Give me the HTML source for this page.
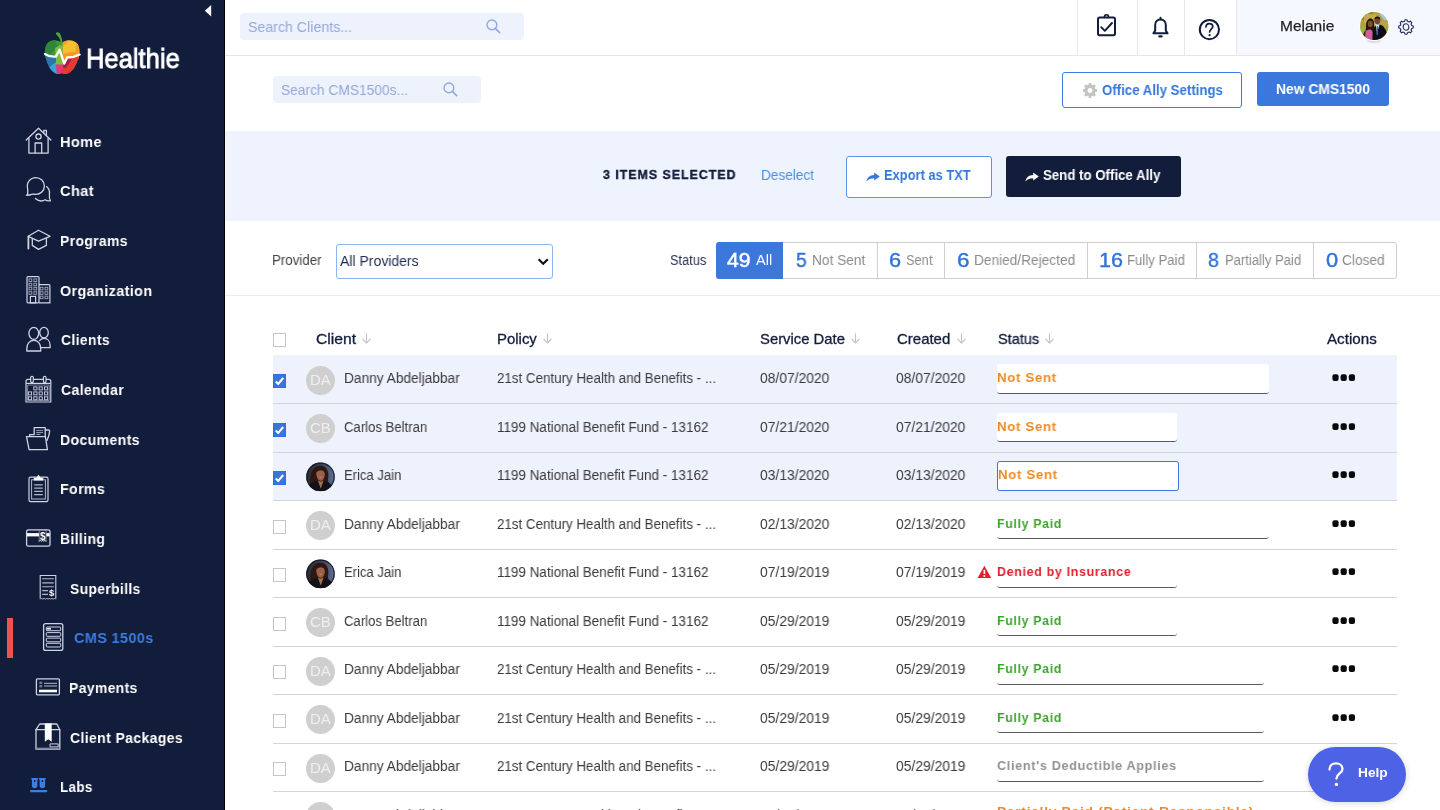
<!DOCTYPE html>
<html>
<head>
<meta charset="utf-8">
<title>CMS 1500s</title>
<style>
*{box-sizing:border-box;margin:0;padding:0}
html,body{width:1440px;height:810px;overflow:hidden;background:#fff;font-family:"Liberation Sans",sans-serif;color:#333}
.abs{position:absolute}
.t{position:absolute;white-space:nowrap;line-height:20px;transform-origin:0 50%;will-change:transform}
#side{position:absolute;left:0;top:0;width:225px;height:810px;background:#121c3b;border-right:1px solid #000}
.bar{position:absolute;left:7px;top:618px;width:6px;height:40px;background:#ef5350}
#main{position:absolute;left:225px;top:0;width:1215px;height:810px;background:#fff}
.hline{position:absolute;height:1px;background:#e6e6e6}
.vline{position:absolute;width:1px;background:#e8e8e8}
.box{position:absolute}
.rowbg{position:absolute;left:273px;width:1124px;background:#eef2fd}
.rowln{position:absolute;left:273px;width:1124px;height:1px;background:#d4d4d4;z-index:1}
.cb{position:absolute;left:273px;width:13px;height:14px;border:1px solid #c6c6c6;background:#fff;border-radius:0}
.cb.on{background:#3874de;border-color:#336fda;border-radius:0}
.cb svg{position:absolute;left:-1px;top:-1px}
.av{position:absolute;left:306px;width:29px;height:29px;border-radius:50%;background:#cfcfcf}
.ul{position:absolute;left:997px;height:29.750px;border-bottom:1px solid #5a5a5a;border-radius:3px}
.ul.w{background:#fff}
.ul.f{background:#fff;border:1px solid #3c78e0}
.sep{position:absolute;top:242px;width:1px;height:36.700px;background:#cfcfcf}
</style>
</head>
<body>
<div id="side">
<svg class="abs" style="left:200px;top:0" width="16" height="22" viewBox="200 0 16 22"><polygon points="204.800,10.800 211.200,4.900 211.200,16.600" fill="#fff"/></svg>
<svg class="abs" style="left:42px;top:30px" width="40" height="46" viewBox="42 30 40 46">
<defs><clipPath id="ap"><path d="M62 43 C58 39.300 50.500 39 47 44 C43 50 45.200 60.500 49.500 67.500 C52.800 72.800 57.500 75.600 62 73.200 C66.500 75.600 71.200 72.800 74.500 67.500 C78.800 60.500 81.500 50 77.500 44 C74 39 66 39.300 62 43 Z"/></clipPath></defs>
<g clip-path="url(#ap)">
<rect x="42" y="36" width="21" height="22" fill="#3c9a3a"/>
<polygon points="44,42 54,38 58,47 48,56 43,54" fill="#2f8636"/>
<polygon points="55,48 62,44 63,66 56,66" fill="#7dbd3a"/>
<rect x="62.600" y="36" width="20" height="24" fill="#f7c02f"/>
<polygon points="62.600,40 70,39 66,44 62.600,46" fill="#f4a12c"/>
<polygon points="76,44 82,42 82,58 75,52" fill="#f4a12c"/>
<polygon points="62.600,54 72,52 82,54 82,60 62.600,60" fill="#f3962b"/>
<rect x="42" y="56.500" width="15" height="22" fill="#2b74ad"/>
<polygon points="48,68 56,62 58,78 50,76" fill="#3aa3d4"/>
<polygon points="56,64 66,64 62,78 57,78" fill="#e8337d"/>
<polygon points="66,58 82,56 80,72 62,78 62,70" fill="#e63b2e"/>
<polygon points="64,60 72,59 66,68 63,68" fill="#a3214e"/>
<polygon points="56,57 62,57 63,64.500 56,64.500" fill="#7dbd3a"/>
</g>
<path d="M55.800 33 C57.200 31.600 59.400 32 60.400 34.400 C61.800 37.600 62.600 41.500 62.600 46 L61.400 46 C61 41.600 59.800 38 58 36.200 C57 35.200 55.800 34.400 55.800 33 Z" fill="#4aa63a"/>
<path d="M45 54 C48.500 56.400 52 57 55.800 56.600 L59.600 49.600 L64.200 63.600 L67.200 57.400 C71.500 57.600 76 56.500 79.600 54.600" fill="none" stroke="#fff" stroke-width="2.300" stroke-linejoin="round" stroke-linecap="round"/>
</svg>
<div class="t" id="logo" style="left:85.62px;top:48.12px;font-size:28.5px;color:#fff;transform:scaleX(0.8964);-webkit-text-stroke:0.9px #fff;">Healthie</div>
<div class="bar"></div>
<svg class="abs" style="left:22px;top:124px" width="34" height="34" viewBox="22 124 34 34"><g fill="none" stroke="#cfd4e2" stroke-width="1.3" stroke-linejoin="round" stroke-linecap="round"><path d="M26.2 140 L38.5 128.2 L50.9 140"/><path d="M28.9 138.5 V153.1 H48.1 V138.5"/><path d="M35.1 153 V143 H41.7 V153"/><circle cx="38.5" cy="136.6" r="2.6"/><path d="M43.8 132.8 V130.4 H46.4 V135.4"/></g></svg>
<div class="t" id="nav0" style="left:60.36px;top:131.50px;font-size:15px;color:#fff;font-weight:bold;letter-spacing:0.4px;transform:scaleX(0.9686);">Home</div>
<svg class="abs" style="left:22px;top:174px" width="34" height="34" viewBox="22 174 34 34"><g fill="none" stroke="#cfd4e2" stroke-width="1.3" stroke-linejoin="round" stroke-linecap="round"><path d="M27.6 194.6 C27.8 193 28 191 27.6 188.600 C26.200 182.600 30.200 177.600 35.800 177.600 C40.600 177.600 44.400 181.400 44.400 186 C44.400 190.800 40.400 194.600 35.600 194.400 C33.800 194.400 32.600 193.800 31.400 194.400 C30 195.200 28.400 195.400 26.400 195.200 Z"/><path d="M46.600 186.600 C48.800 188.400 49.800 191 49.400 193.800 C49.200 196.200 49 198.600 50.400 200.800 C48.400 201.200 46.600 200.800 45.200 199.800 C42.600 201.400 38.600 201.200 35.400 198.400"/></g></svg>
<div class="t" id="nav1" style="left:60.28px;top:181.18px;font-size:15px;color:#fff;font-weight:bold;letter-spacing:0.4px;transform:scaleX(0.9746);">Chat</div>
<svg class="abs" style="left:22px;top:224px" width="34" height="34" viewBox="22 224 34 34"><g fill="none" stroke="#cfd4e2" stroke-width="1.3" stroke-linejoin="round" stroke-linecap="round"><path d="M38.5 230.2 L50 236.3 L38.5 241.2 L28.2 236.3 Z"/><path d="M28.4 236.6 V248.6" stroke-width="1.8"/><path d="M32.3 238.6 V245.4 L38.5 249.4 L46.4 245.4 V238.2"/></g></svg>
<div class="t" id="nav2" style="left:60.38px;top:230.85px;font-size:15px;color:#fff;font-weight:bold;letter-spacing:0.4px;transform:scaleX(0.9265);">Programs</div>
<svg class="abs" style="left:22px;top:272px" width="34" height="34" viewBox="22 272 34 34"><g fill="none" stroke="#cfd4e2" stroke-width="1.2"><rect x="27" y="276.6" width="12" height="26.2" rx="1"/><path d="M39 284.6 H49 Q49.9 284.6 49.9 285.6 V302.8 H39"/><rect x="30.4" y="296.4" width="5.2" height="6.4"/></g><g fill="none" stroke="#cfd4e2" stroke-width="0.9" opacity="0.75"><rect x="29.0" y="278.9" width="2.8" height="2.6"/><rect x="29.0" y="283.2" width="2.8" height="2.6"/><rect x="29.0" y="287.3" width="2.8" height="2.6"/><rect x="29.0" y="291.7" width="2.8" height="2.6"/><rect x="33.9" y="278.9" width="2.8" height="2.6"/><rect x="33.9" y="283.2" width="2.8" height="2.6"/><rect x="33.9" y="287.3" width="2.8" height="2.6"/><rect x="33.9" y="291.7" width="2.8" height="2.6"/><rect x="40.2" y="287.3" width="2.8" height="2.6"/><rect x="40.2" y="291.7" width="2.8" height="2.6"/><rect x="40.2" y="296.1" width="2.8" height="2.6"/><rect x="45.0" y="287.3" width="2.8" height="2.6"/><rect x="45.0" y="291.7" width="2.8" height="2.6"/><rect x="45.0" y="296.1" width="2.8" height="2.6"/></g></svg>
<div class="t" id="nav3" style="left:60.28px;top:280.53px;font-size:15px;color:#fff;font-weight:bold;letter-spacing:0.4px;transform:scaleX(0.9585);">Organization</div>
<svg class="abs" style="left:22px;top:322px" width="34" height="34" viewBox="22 322 34 34"><g fill="none" stroke="#cfd4e2" stroke-width="1.3" stroke-linejoin="round" stroke-linecap="round"><ellipse cx="33.8" cy="333.3" rx="4.9" ry="6"/><path d="M26.8 351 V348.4 C26.8 343.6 29.8 340.4 33.8 340.4 C37.8 340.4 40.7 343.6 40.7 348.4 V351 Z"/><ellipse cx="44" cy="332.6" rx="4.3" ry="5.3"/><path d="M39.6 340.6 C41 339 42.4 338.4 44 338.4 C47.6 338.4 50.1 341.2 50.1 345.4 V347.7 H41.2"/></g></svg>
<div class="t" id="nav4" style="left:60.51px;top:330.20px;font-size:15px;color:#fff;font-weight:bold;letter-spacing:0.4px;transform:scaleX(0.9289);">Clients</div>
<svg class="abs" style="left:22px;top:372px" width="34" height="34" viewBox="22 372 34 34"><g fill="none" stroke="#cfd4e2" stroke-width="1.2"><path d="M26 402 V381.4 Q26 379.4 28 379.4 H48.8 Q50.8 379.4 50.8 381.4 V402 Z"/><path d="M26 383.4 H50.8"/><path d="M27.6 385 H49.2 V400.4 H27.6 Z" stroke-width="0.8" opacity="0.7"/></g><g fill="#121c3b" stroke="#dfe3ee" stroke-width="1.1"><rect x="30.7" y="376.2" width="2.6" height="6.4" rx="1.3"/><rect x="43.4" y="376.2" width="2.6" height="6.4" rx="1.3"/></g><g fill="none" stroke="#cfd4e2" stroke-width="0.9"><rect x="28.4" y="391.9" width="3.2" height="3"/><rect x="28.4" y="396.8" width="3.2" height="3"/><rect x="33.8" y="386.9" width="3.2" height="3"/><rect x="33.8" y="391.9" width="3.2" height="3"/><rect x="33.8" y="396.8" width="3.2" height="3"/><rect x="39.1" y="386.9" width="3.2" height="3"/><rect x="39.1" y="391.9" width="3.2" height="3"/><rect x="39.1" y="396.8" width="3.2" height="3"/><rect x="44.5" y="386.9" width="3.2" height="3"/><rect x="44.5" y="391.9" width="3.2" height="3"/><rect x="44.5" y="396.8" width="3.2" height="3"/></g></svg>
<div class="t" id="nav5" style="left:60.51px;top:379.88px;font-size:15px;color:#fff;font-weight:bold;letter-spacing:0.4px;transform:scaleX(0.9354);">Calendar</div>
<svg class="abs" style="left:22px;top:422px" width="34" height="34" viewBox="22 422 34 34"><g fill="none" stroke="#cfd4e2" stroke-width="1.3" stroke-linejoin="round" stroke-linecap="round" stroke-width="1.2"><path d="M26.5 436.6 H45.4 L47.4 449.6 H29.1 Z"/><path d="M29.6 436.4 V434.6 H34.2 V427.6 H45.2 V436.4"/><path d="M45.4 430 H48.4 Q49.8 430 49.6 431.6 C49.2 435 48.2 438 47 440.4"/><path d="M36.6 430.6 H42.6 M36.6 432.6 H42.6 M36.6 434.4 H40" stroke-width="0.9" opacity="0.8"/></g></svg>
<div class="t" id="nav6" style="left:60.37px;top:429.55px;font-size:15px;color:#fff;font-weight:bold;letter-spacing:0.4px;transform:scaleX(0.9371);">Documents</div>
<svg class="abs" style="left:22px;top:470px" width="34" height="36" viewBox="22 470 34 36"><g fill="none" stroke="#cfd4e2" stroke-width="1.2"><rect x="29" y="477.2" width="19" height="24.4" rx="1.6"/><rect x="31.6" y="479.8" width="13.8" height="19.2" stroke-width="1" opacity="0.85"/><path d="M34.2 484.8 H42.8 M34.2 488.1 H42.8 M34.2 491.4 H42.8 M34.2 494.7 H42.8" stroke-width="1.3" opacity="0.85"/></g><path d="M33.8 480.6 V477.8 H36.6 L38.5 474.6 L40.4 477.8 H43.2 V480.6 Z" fill="#fff"/></svg>
<div class="t" id="nav7" style="left:60.42px;top:479.23px;font-size:15px;color:#fff;font-weight:bold;letter-spacing:0.4px;transform:scaleX(0.9451);">Forms</div>
<svg class="abs" style="left:22px;top:524px;will-change:transform" width="34" height="28" viewBox="22 524 34 28"><g fill="none" stroke="#cfd4e2" stroke-width="1.3"><rect x="26.6" y="529.8" width="23.4" height="16.4" rx="1.8"/></g><rect x="27" y="533.1" width="22.6" height="3.3" fill="#fff"/><rect x="39" y="530.2" width="7.3" height="11.6" fill="#121c3b"/><path d="M39.2 541.8 V530.4 H46.1 V541.8" fill="none" stroke="#cfd4e2" stroke-width="0.6"/><path d="M39.2 541.4 l1.15 -1.2 l1.15 1.2 l1.15 -1.2 l1.15 1.2 l1.15 -1.2 l1.15 1.2" fill="none" stroke="#fff" stroke-width="0.9"/><text x="42.700" y="539.800" font-family="Liberation Sans" font-size="10" font-weight="bold" fill="#fff" text-anchor="middle">$</text></svg>
<div class="t" id="nav8" style="left:60.37px;top:528.90px;font-size:15px;color:#fff;font-weight:bold;letter-spacing:0.4px;transform:scaleX(0.9313);">Billing</div>
<svg class="abs" style="left:36px;top:572px;will-change:transform" width="26" height="32" viewBox="36 572 26 32"><g fill="none" stroke="#cfd4e2" stroke-width="1.1"><path d="M40.2 598.6 V575.5 H55.8 V598.6"/><path d="M40.2 599.4 l1.3 -1.4 l1.3 1.4 l1.3 -1.4 l1.3 1.4 l1.3 -1.4 l1.3 1.4 l1.3 -1.4 l1.3 1.4 l1.3 -1.4 l1.3 1.4 l1.3 -1.4 l1.3 1.4" stroke-width="0.8"/><path d="M42.2 578.8 H53.8 M42.2 582.9 H53.8 M42.2 586.7 H53.8 M42.2 590.6 H48 M42.2 594.4 H48" stroke-width="1.1" opacity="0.85"/></g><text x="51.6" y="595.6" font-family="Liberation Sans" font-size="9.5" font-weight="bold" fill="#fff" text-anchor="middle">$</text></svg>
<div class="t" id="nav9" style="left:69.57px;top:578.58px;font-size:15px;color:#fff;font-weight:bold;letter-spacing:0.4px;transform:scaleX(0.9233);">Superbills</div>
<svg class="abs" style="left:40px;top:620px" width="28" height="34" viewBox="40 620 28 34"><g fill="none" stroke="#cfd4e2" stroke-width="1.3"><rect x="43.6" y="623.6" width="19.2" height="26.8" rx="2"/></g><g fill="none" stroke="#cfd4e2" stroke-width="1"><rect x="46.3" y="627" width="14.4" height="3.7" rx="0.8"/><rect x="46.3" y="632.6" width="14.4" height="3.7" rx="0.8"/><rect x="46.3" y="638.1" width="14.4" height="3.7" rx="0.8"/><rect x="46.3" y="643.3" width="14.4" height="3.7" rx="0.8"/></g><path d="M46.8 628.8 H51" stroke="#e8ebf3" stroke-width="1.6"/></svg>
<div class="t" id="nav10" style="left:74.41px;top:628.25px;font-size:15px;color:#3c7de0;font-weight:bold;letter-spacing:0.4px;transform:scaleX(0.9624);">CMS 1500s</div>
<svg class="abs" style="left:32px;top:674px" width="32" height="26" viewBox="32 674 32 26"><g fill="none" stroke="#cfd4e2" stroke-width="1.3"><rect x="36.4" y="678.8" width="23" height="16" rx="1"/><path d="M44 683.3 H57 M44 686 H57" stroke-width="1" opacity="0.85"/></g><rect x="39" y="689.7" width="18" height="2.6" fill="#fff"/><rect x="39.4" y="681.6" width="2.8" height="2.4" fill="#6f7892"/><rect x="39.4" y="685" width="2.8" height="2.4" fill="#6f7892"/></svg>
<div class="t" id="nav11" style="left:69.45px;top:677.93px;font-size:15px;color:#fff;font-weight:bold;letter-spacing:0.4px;transform:scaleX(0.9275);">Payments</div>
<svg class="abs" style="left:32px;top:720px" width="32" height="34" viewBox="32 720 32 34"><g fill="none" stroke="#cfd4e2" stroke-width="1.3" stroke-linejoin="round" stroke-linecap="round"><rect x="36" y="729.7" width="23.8" height="19.5"/><path d="M36 729.7 L39.7 724 H56.8 L59.8 729.7"/><rect x="50.4" y="743.9" width="7.8" height="3" stroke-width="1"/></g><path d="M44.8 723.6 H51.7 V741.8 L48.25 739.2 L44.8 741.8 Z" fill="#fff"/><path d="M36 748.4 H59.8" stroke="#7c86a3" stroke-width="1.6"/></svg>
<div class="t" id="nav12" style="left:69.72px;top:727.60px;font-size:15px;color:#fff;font-weight:bold;letter-spacing:0.4px;transform:scaleX(0.9342);">Client Packages</div>
<svg class="abs" style="left:28px;top:774px" width="22" height="22" viewBox="28 774 22 22"><g fill="#3b80e0"><path d="M31.3 778 H38 V779.4 H37.4 V785.6 Q37.4 788.2 34.65 788.2 Q31.9 788.2 31.9 785.6 V779.4 H31.3 Z"/><path d="M39 778 H45.7 V779.4 H45.1 V785.6 Q45.1 788.2 42.35 788.2 Q39.6 788.2 39.6 785.6 V779.4 H39 Z"/><rect x="30.1" y="790" width="17" height="2.2" rx="0.6"/></g><rect x="34" y="780.2" width="1.4" height="1.8" fill="#121c3b"/><rect x="41.7" y="780.2" width="1.4" height="1.8" fill="#121c3b"/></svg>
<div class="t" id="nav13" style="left:60.48px;top:777.28px;font-size:15px;color:#fff;font-weight:bold;letter-spacing:0.4px;transform:scaleX(0.8959);">Labs</div>
</div>
<div id="main"></div>
<div class="box" style="left:240px;top:13px;width:284px;height:27px;background:#eef2fd;border-radius:4px"></div>
<div class="t" id="sc" style="left:248.37px;top:17.31px;font-size:14.4px;color:#93a8da;transform:scaleX(0.9847);">Search Clients...</div>
<svg class="abs" style="left:486px;top:19px" width="15" height="15" viewBox="0 0 15 15"><circle cx="5.9" cy="5.9" r="4.9" fill="none" stroke="#93a8da" stroke-width="1.4"/><path d="M9.6 9.6 L13.6 13.6" stroke="#93a8da" stroke-width="1.6" stroke-linecap="round"/></svg>
<div class="box" style="left:1237px;top:0px;width:203px;height:55px;background:#f5f8fe"></div>
<div class="hline" style="left:225px;top:55px;width:1215px"></div>
<div class="vline" style="left:1077px;top:0;height:55px"></div>
<div class="vline" style="left:1137px;top:0;height:55px"></div>
<div class="vline" style="left:1184px;top:0;height:55px"></div>
<div class="vline" style="left:1236px;top:0;height:55px"></div>
<svg class="abs" style="left:1094px;top:12px" width="26" height="28" viewBox="1094 12 26 28"><g fill="none" stroke="#121c3b" stroke-width="2" stroke-linejoin="round" stroke-linecap="round"><rect x="1098" y="17.6" width="17" height="17.6" rx="1.6"/><path d="M1101.2 27.2 L1104.8 30.8 L1112 23" stroke-width="1.9"/><path d="M1104.4 17.4 Q1104.4 14.8 1106.5 14.8 Q1108.6 14.8 1108.6 17.4" stroke-width="1.6"/></g></svg>
<svg class="abs" style="left:1150px;top:14px" width="22" height="26" viewBox="1150 14 22 26"><g fill="none" stroke="#121c3b" stroke-width="2" stroke-linejoin="round" stroke-linecap="round"><path d="M1153.4 33.2 H1167.6 L1165.8 30.6 V25 C1165.8 21.6 1163.6 19.4 1160.5 19.4 C1157.4 19.4 1155.2 21.6 1155.2 25 V30.6 Z"/><path d="M1160.5 19 V17.8"/><path d="M1159.4 36.4 H1161.6" stroke-width="2.2"/></g></svg>
<svg class="abs" style="left:1197px;top:17px" width="26" height="26" viewBox="1197 17 26 26"><circle cx="1209.4" cy="29.6" r="9.6" fill="none" stroke="#121c3b" stroke-width="2"/><path d="M1206 27 C1206 24.8 1207.4 23.6 1209.4 23.6 C1211.4 23.6 1212.8 24.8 1212.8 26.6 C1212.8 29 1209.6 29.2 1209.6 32" fill="none" stroke="#121c3b" stroke-width="1.7" stroke-linecap="round"/><circle cx="1209.6" cy="35.2" r="1.1" fill="#121c3b"/></svg>
<svg class="abs" style="left:1358px;top:10px" width="33" height="34" viewBox="-2 -2 33 34"><defs><clipPath id="avc"><circle cx="14.200" cy="14" r="14.100"/></clipPath><filter id="avs" x="-20%" y="-20%" width="140%" height="150%"><feGaussianBlur stdDeviation="0.900"/></filter></defs><ellipse cx="14.200" cy="28.600" rx="7" ry="1.600" fill="#9a9a9a" opacity="0.550" filter="url(#avs)"/><circle cx="14.200" cy="14" r="15.200" fill="#fff" opacity="0.900"/><g clip-path="url(#avc)"><rect x="-1" y="-1" width="31" height="31" fill="#b39f45"/><rect x="-1" y="-1" width="14" height="9" fill="#8c7f3c"/><rect x="4" y="2" width="12" height="9" fill="#c4ad4c"/><polygon points="19,-1 30,-1 30,9 24,8 20,3" fill="#a9c2e6"/><rect x="22" y="8" width="8" height="10" fill="#b8a24a"/><rect x="-1" y="15" width="4" height="7" fill="#8bbf3a"/><rect x="26" y="15" width="4" height="6" fill="#7fae38"/><rect x="12" y="11" width="4" height="5" fill="#e2cf4e"/><path d="M6 14 C6 8 9 6.500 10.500 6.500 C13 6.500 14.500 9 14.300 14 C14.300 18 13.500 21 13 24 L5 24 C5.500 20 6 17 6 14 Z" fill="#24150f"/><ellipse cx="10.300" cy="12" rx="2.500" ry="3.300" fill="#7d4b36"/><path d="M3 30 C3 22 5.500 17.500 9.500 17.500 C12.500 17.500 13.500 20 13.500 30 Z" fill="#cf5f98"/><path d="M2.500 30 C2.500 24 3.500 20 5.500 18.500 C5.500 22 5 26 5.500 30 Z" fill="#3a2118"/><ellipse cx="17.300" cy="8.400" rx="2.900" ry="3.700" fill="#74452f"/><path d="M14.300 7.600 C14.300 3.600 20.400 3.400 20.400 7.600 C19 6 15.700 6 14.300 7.600 Z" fill="#1d1210"/><path d="M12.500 30 C12 20 13.500 13 17.500 12.500 C23 12 27 16 28.500 30 Z" fill="#0f0f13"/><path d="M15.600 12.600 L17 21 L19.600 12.400 Z" fill="#dfe4f0"/><path d="M16.800 14 L16.300 22 L17.300 23.500 L18.200 22 L17.900 14 Z" fill="#3e5cab"/></g></svg>
<svg class="abs" style="left:1395.800px;top:16.900px" width="20" height="20" viewBox="-10 -10 20 20"><g fill="none" stroke="#1f2a52" stroke-width="1.100" stroke-linejoin="round"><path d="M5.72 -1.43 L7.23 -1.02 L7.23 1.02 L5.72 1.43 L5.06 3.04 L5.83 4.39 L4.39 5.83 L3.04 5.06 L1.43 5.72 L1.02 7.23 L-1.02 7.23 L-1.43 5.72 L-3.04 5.06 L-4.39 5.83 L-5.83 4.39 L-5.06 3.04 L-5.72 1.43 L-7.23 1.02 L-7.23 -1.02 L-5.72 -1.43 L-5.06 -3.04 L-5.83 -4.39 L-4.39 -5.83 L-3.04 -5.06 L-1.43 -5.72 L-1.02 -7.23 L1.02 -7.23 L1.43 -5.72 L3.04 -5.06 L4.39 -5.83 L5.83 -4.39 L5.06 -3.04 Z"/><ellipse cx="0" cy="0" rx="2.800" ry="3.200"/></g></svg>
<div class="t" id="mel" style="left:1280.34px;top:15.70px;font-size:15.3px;color:#222;transform:scaleX(1.0140);-webkit-text-stroke:0.25px #222;">Melanie</div>
<div class="box" style="left:273px;top:76px;width:208px;height:26.5px;background:#eef2fd;border-radius:4px"></div>
<div class="t" id="scms" style="left:281.42px;top:80.01px;font-size:14.4px;color:#93a8da;transform:scaleX(0.9568);">Search CMS1500s...</div>
<svg class="abs" style="left:443px;top:82px" width="15" height="15" viewBox="0 0 15 15"><circle cx="5.9" cy="5.9" r="4.9" fill="none" stroke="#93a8da" stroke-width="1.4"/><path d="M9.6 9.6 L13.6 13.6" stroke="#93a8da" stroke-width="1.6" stroke-linecap="round"/></svg>
<div class="box" style="left:1062px;top:71.5px;width:180px;height:36.5px;border:1px solid #3c7de0;border-radius:3px;background:#fff"></div>
<svg class="abs" style="left:1083px;top:83px" width="14" height="15" preserveAspectRatio="none" viewBox="-8.300 -8.300 16.600 16.600"><path fill="#c4c4c4" fill-rule="evenodd" d="M-1.400 -8.300 H1.400 L1.900 -6.200 L3.100 -5.700 L5 -6.900 L6.900 -5 L5.700 -3.100 L6.200 -1.900 L8.300 -1.400 V1.400 L6.200 1.900 L5.700 3.100 L6.900 5 L5 6.900 L3.100 5.700 L1.900 6.200 L1.400 8.300 H-1.400 L-1.900 6.200 L-3.100 5.700 L-5 6.900 L-6.900 5 L-5.700 3.100 L-6.200 1.900 L-8.300 1.400 V-1.400 L-6.200 -1.900 L-5.700 -3.100 L-6.900 -5 L-5 -6.900 L-3.100 -5.700 L-1.900 -6.200 Z M0 -2.900 A2.900 2.900 0 1 0 0.010 -2.900 Z"/></svg>
<div class="t" id="oas" style="left:1102.40px;top:80.15px;font-size:14px;color:#3577dd;font-weight:bold;transform:scaleX(0.9456);">Office Ally Settings</div>
<div class="box" style="left:1257px;top:71.5px;width:132px;height:34.5px;background:#3c78dc;border-radius:3px"></div>
<div class="t" id="ncms" style="left:1276.20px;top:79.40px;font-size:14px;color:#fff;font-weight:bold;transform:scaleX(0.9893);">New CMS1500</div>
<div class="box" style="left:225px;top:131px;width:1215px;height:90px;background:#eef3fd"></div>
<div class="t" id="sel" style="left:603.38px;top:165.12px;font-size:13.5px;color:#121c3b;font-weight:bold;letter-spacing:1px;transform:scaleX(0.9252);-webkit-text-stroke:0.4px #121c3b;">3 ITEMS SELECTED</div>
<div class="t" id="desel" style="left:761.42px;top:165.15px;font-size:14px;color:#4a90e2;transform:scaleX(0.9725);">Deselect</div>
<div class="box" style="left:846px;top:155.5px;width:146px;height:42px;border:1px solid #5b93e6;border-radius:3px;background:#fff"></div>
<svg class="abs" style="left:866px;top:172px" width="14" height="10" viewBox="0 0 14 10"><path d="M8.2 0.600 L13.800 4.600 L8.200 8.600 V6.200 C5 6.200 2.400 7 0.400 9.400 C1.200 5.400 3.800 3 8.200 2.900 Z" fill="#3577dd"/></svg>
<div class="t" id="exp" style="left:884.23px;top:165.15px;font-size:14px;color:#3577dd;font-weight:bold;transform:scaleX(0.9205);">Export as TXT</div>
<div class="box" style="left:1005.5px;top:155.5px;width:175.5px;height:41.5px;background:#121c3b;border-radius:3px"></div>
<svg class="abs" style="left:1025px;top:172px" width="14" height="10" viewBox="0 0 14 10"><path d="M8.2 0.600 L13.800 4.600 L8.200 8.600 V6.200 C5 6.200 2.400 7 0.400 9.400 C1.200 5.400 3.800 3 8.200 2.900 Z" fill="#fff"/></svg>
<div class="t" id="send" style="left:1043.13px;top:165.15px;font-size:14px;color:#fff;font-weight:bold;transform:scaleX(0.9468);">Send to Office Ally</div>
<div class="t" id="prov" style="left:272.37px;top:250.05px;font-size:14px;color:#444;transform:scaleX(0.9493);">Provider</div>
<div class="box" style="left:336px;top:244px;width:217px;height:34.5px;border:1px solid #8fb3ee;border-radius:3px;background:#fff"></div>
<div class="t" id="allp" style="left:339.75px;top:251.01px;font-size:14.4px;color:#1f2a52;transform:scaleX(0.9737);">All Providers</div>
<svg class="abs" style="left:537px;top:257px" width="12" height="10" viewBox="0 0 12 10"><path d="M1.600 2.200 L6.200 6.800 L10.800 2.200" fill="none" stroke="#111" stroke-width="2.200"/></svg>
<div class="t" id="stat" style="left:670.25px;top:250.15px;font-size:14px;color:#2a3350;transform:scaleX(0.9133);">Status</div>
<div class="box" style="left:715.5px;top:241.5px;width:681.2px;height:37.7px;border:1px solid #cfcfcf;border-radius:3px;background:#fff"></div>
<div class="box" style="left:715.5px;top:241.5px;width:67.7px;height:37.7px;background:#3c78dc;border-radius:3px 0 0 3px"></div>
<div class="sep" style="left:877px"></div>
<div class="sep" style="left:944px"></div>
<div class="sep" style="left:1086.5px"></div>
<div class="sep" style="left:1196px"></div>
<div class="sep" style="left:1313px"></div>
<div class="t" id="n49" style="left:726.69px;top:249.87px;font-size:20.3px;color:#fff;transform:scaleX(1.0423);-webkit-text-stroke:0.5px #fff;">49</div>
<div class="t" id="lall" style="left:755.60px;top:250.05px;font-size:14px;color:#fff;transform:scaleX(1.0366);">All</div>
<div class="t" id="num0" style="left:795.67px;top:249.87px;font-size:20.3px;color:#2f73d8;transform:scaleX(0.9454);-webkit-text-stroke:0.4px #2f73d8;">5</div>
<div class="t" id="num1" style="left:888.95px;top:249.87px;font-size:20.3px;color:#2f73d8;transform:scaleX(1.0724);-webkit-text-stroke:0.4px #2f73d8;">6</div>
<div class="t" id="num2" style="left:956.57px;top:249.87px;font-size:20.3px;color:#2f73d8;transform:scaleX(1.1073);-webkit-text-stroke:0.4px #2f73d8;">6</div>
<div class="t" id="num3" style="left:1098.87px;top:249.87px;font-size:20.3px;color:#2f73d8;transform:scaleX(1.0619);-webkit-text-stroke:0.4px #2f73d8;">16</div>
<div class="t" id="num4" style="left:1208.37px;top:249.87px;font-size:20.3px;color:#2f73d8;transform:scaleX(0.9635);-webkit-text-stroke:0.4px #2f73d8;">8</div>
<div class="t" id="num5" style="left:1325.65px;top:249.87px;font-size:20.3px;color:#2f73d8;transform:scaleX(1.0796);-webkit-text-stroke:0.4px #2f73d8;">0</div>
<div class="t" id="lab0" style="left:812.07px;top:250.05px;font-size:14px;color:#8b8b8b;transform:scaleX(0.9787);">Not Sent</div>
<div class="t" id="lab1" style="left:906.30px;top:250.05px;font-size:14px;color:#8b8b8b;transform:scaleX(0.9173);">Sent</div>
<div class="t" id="lab2" style="left:973.80px;top:250.05px;font-size:14px;color:#8b8b8b;transform:scaleX(0.9775);">Denied/Rejected</div>
<div class="t" id="lab3" style="left:1127.13px;top:250.05px;font-size:14px;color:#8b8b8b;transform:scaleX(0.9412);">Fully Paid</div>
<div class="t" id="lab4" style="left:1225.36px;top:250.05px;font-size:14px;color:#8b8b8b;transform:scaleX(0.9315);">Partially Paid</div>
<div class="t" id="lab5" style="left:1342.47px;top:250.05px;font-size:14px;color:#8b8b8b;transform:scaleX(0.9799);">Closed</div>
<div class="hline" style="left:225px;top:294.500px;width:1215px;background:#ececec"></div>
<div class="cb" style="top:333px"></div>
<div class="t" id="th0" style="left:316.49px;top:329.37px;font-size:14.8px;color:#121c3b;transform:scaleX(1.0615);-webkit-text-stroke:0.3px #121c3b;">Client</div>
<svg class="abs" style="left:362px;top:333px" width="9" height="11" viewBox="0 0 9 11"><path d="M4.500 0.300 V9.800 M0.600 6 L4.500 10 L8.400 6" fill="none" stroke="#c4c4c4" stroke-width="1.100"/></svg>
<div class="t" id="th1" style="left:497.48px;top:329.37px;font-size:14.8px;color:#121c3b;transform:scaleX(1.0093);-webkit-text-stroke:0.3px #121c3b;">Policy</div>
<svg class="abs" style="left:543px;top:333px" width="9" height="11" viewBox="0 0 9 11"><path d="M4.500 0.300 V9.800 M0.600 6 L4.500 10 L8.400 6" fill="none" stroke="#c4c4c4" stroke-width="1.100"/></svg>
<div class="t" id="th2" style="left:760.34px;top:329.37px;font-size:14.8px;color:#121c3b;transform:scaleX(1.0020);-webkit-text-stroke:0.3px #121c3b;">Service Date</div>
<svg class="abs" style="left:851.25px;top:333px" width="9" height="11" viewBox="0 0 9 11"><path d="M4.500 0.300 V9.800 M0.600 6 L4.500 10 L8.400 6" fill="none" stroke="#c4c4c4" stroke-width="1.100"/></svg>
<div class="t" id="th3" style="left:896.58px;top:329.37px;font-size:14.8px;color:#121c3b;transform:scaleX(1.0121);-webkit-text-stroke:0.3px #121c3b;">Created</div>
<svg class="abs" style="left:957px;top:333px" width="9" height="11" viewBox="0 0 9 11"><path d="M4.500 0.300 V9.800 M0.600 6 L4.500 10 L8.400 6" fill="none" stroke="#c4c4c4" stroke-width="1.100"/></svg>
<div class="t" id="th4" style="left:998.09px;top:329.37px;font-size:14.8px;color:#121c3b;transform:scaleX(0.9817);-webkit-text-stroke:0.3px #121c3b;">Status</div>
<svg class="abs" style="left:1045px;top:333px" width="9" height="11" viewBox="0 0 9 11"><path d="M4.500 0.300 V9.800 M0.600 6 L4.500 10 L8.400 6" fill="none" stroke="#c4c4c4" stroke-width="1.100"/></svg>
<div class="t" id="th5" style="left:1327.49px;top:329.37px;font-size:14.8px;color:#121c3b;transform:scaleX(1.0245);-webkit-text-stroke:0.3px #121c3b;">Actions</div>
<div class="rowbg" style="top:355.3px;height:48.2px"></div>
<div class="rowln" style="top:403.0px"></div>
<div class="cb on" style="top:374.2px"><svg width="13" height="14" viewBox="0 0 13 14"><path d="M2.800 7.400 L5.200 9.900 L10.200 4" fill="none" stroke="#fff" stroke-width="2.100"/></svg></div>
<div class="av" style="top:365.5px"></div>
<div class="t" id="ini0" style="left:309.70px;top:369.80px;font-size:15px;color:#efefef;transform:scaleX(1.0000);">DA</div>
<div class="t" id="nm0" style="left:344.28px;top:368.15px;font-size:14px;color:#3a3a3a;transform:scaleX(0.9783);">Danny Abdeljabbar</div>
<div class="t" id="pol0" style="left:496.66px;top:368.15px;font-size:14px;color:#3a3a3a;transform:scaleX(0.9539);">21st Century Health and Benefits - ...</div>
<div class="t" id="sd0" style="left:760.20px;top:368.15px;font-size:14px;color:#3a3a3a;transform:scaleX(0.9892);">08/07/2020</div>
<div class="t" id="cr0" style="left:896.20px;top:368.15px;font-size:14px;color:#3a3a3a;transform:scaleX(0.9892);">08/07/2020</div>
<div class="ul w" style="top:364.0px;width:271.5px"></div>
<div class="t" id="st0" style="left:996.81px;top:368.09px;font-size:13.6px;color:#ee8a22;font-weight:bold;letter-spacing:0.7px;transform:scaleX(0.9723);">Not Sent</div>
<svg class="abs" style="left:1332px;top:374.0px" width="24" height="8" viewBox="0 0 24 8"><g fill="#0a0a0a"><rect x="0.400" y="0.300" width="6.200" height="6.600" rx="2"/><rect x="8.600" y="0.300" width="6.200" height="6.600" rx="2"/><rect x="16.800" y="0.300" width="6.200" height="6.600" rx="2"/></g></svg>
<div class="rowbg" style="top:403.8px;height:48.2px"></div>
<div class="rowln" style="top:451.5px"></div>
<div class="cb on" style="top:422.7px"><svg width="13" height="14" viewBox="0 0 13 14"><path d="M2.800 7.400 L5.200 9.900 L10.200 4" fill="none" stroke="#fff" stroke-width="2.100"/></svg></div>
<div class="av" style="top:414.0px"></div>
<div class="t" id="ini1" style="left:309.50px;top:418.30px;font-size:15px;color:#efefef;transform:scaleX(1.0000);">CB</div>
<div class="t" id="nm1" style="left:344.33px;top:416.65px;font-size:14px;color:#3a3a3a;transform:scaleX(0.9373);">Carlos Beltran</div>
<div class="t" id="pol1" style="left:497.34px;top:416.65px;font-size:14px;color:#3a3a3a;transform:scaleX(0.9610);">1199 National Benefit Fund - 13162</div>
<div class="t" id="sd1" style="left:760.20px;top:416.65px;font-size:14px;color:#3a3a3a;transform:scaleX(0.9892);">07/21/2020</div>
<div class="t" id="cr1" style="left:896.20px;top:416.65px;font-size:14px;color:#3a3a3a;transform:scaleX(0.9892);">07/21/2020</div>
<div class="ul w" style="top:412.5px;width:180.3px"></div>
<div class="t" id="st1" style="left:996.81px;top:416.59px;font-size:13.6px;color:#ee8a22;font-weight:bold;letter-spacing:0.7px;transform:scaleX(0.9723);">Not Sent</div>
<svg class="abs" style="left:1332px;top:422.5px" width="24" height="8" viewBox="0 0 24 8"><g fill="#0a0a0a"><rect x="0.400" y="0.300" width="6.200" height="6.600" rx="2"/><rect x="8.600" y="0.300" width="6.200" height="6.600" rx="2"/><rect x="16.800" y="0.300" width="6.200" height="6.600" rx="2"/></g></svg>
<div class="rowbg" style="top:452.3px;height:48.2px"></div>
<div class="rowln" style="top:500.0px"></div>
<div class="cb on" style="top:471.2px"><svg width="13" height="14" viewBox="0 0 13 14"><path d="M2.800 7.400 L5.200 9.900 L10.200 4" fill="none" stroke="#fff" stroke-width="2.100"/></svg></div>
<div class="av" style="top:462.0px;background:none"><svg width="29" height="30" viewBox="0 0 29 30"><defs><clipPath id="ej2c"><circle cx="14.500" cy="14.800" r="14.300"/></clipPath><linearGradient id="ej2cg" x1="0" x2="1" y1="0" y2="0"><stop offset="0" stop-color="#262a36"/><stop offset="0.550" stop-color="#3a4258"/><stop offset="1" stop-color="#65749a"/></linearGradient></defs><g clip-path="url(#ej2c)"><rect width="29" height="30" fill="url(#ej2cg)"/><path d="M4.500 22 C3 12 7 3.800 14 3.800 C21 3.800 23.500 10 22 17 C21.500 20 23 22 24 24 L5 25 Z" fill="#2f1812"/><path d="M10.200 10.500 C10.200 6.800 18.600 6.500 18.800 11 C19 15 17.500 18.800 14.600 18.800 C11.800 18.800 10.200 15 10.200 10.500 Z" fill="#9c5f47"/><path d="M9.800 11.500 C9.500 7 12.500 5.600 14.500 5.800 C17 5.800 19.500 7.500 19.200 11.500 C18 9 16 8 14 8.400 C12 8.600 10.500 9.500 9.800 11.500 Z" fill="#2f1812"/><path d="M12.600 14.600 Q14.600 16.200 16.600 14.600 Q14.600 15.300 12.600 14.600 Z" fill="#e9d6cc"/><path d="M1 30 C2 22.500 6 19.500 11.500 19 L14.600 26 L18 19 C23 19.500 27 22.500 28 30 Z" fill="#131218"/><path d="M11.800 18.600 L14.800 26.500 L17.600 18.600 C16 19.800 13.400 19.800 11.800 18.600 Z" fill="#a3714f"/></g><circle cx="14.500" cy="14.800" r="13.700" fill="none" stroke="#14151b" stroke-width="1.300" opacity="0.800"/></svg>
</div>
<div class="t" id="nm2" style="left:344.30px;top:465.15px;font-size:14px;color:#3a3a3a;transform:scaleX(0.9331);">Erica Jain</div>
<div class="t" id="pol2" style="left:497.34px;top:465.15px;font-size:14px;color:#3a3a3a;transform:scaleX(0.9610);">1199 National Benefit Fund - 13162</div>
<div class="t" id="sd2" style="left:760.20px;top:465.15px;font-size:14px;color:#3a3a3a;transform:scaleX(0.9892);">03/13/2020</div>
<div class="t" id="cr2" style="left:896.20px;top:465.15px;font-size:14px;color:#3a3a3a;transform:scaleX(0.9892);">03/13/2020</div>
<div class="ul f" style="top:461.0px;width:182px"></div>
<div class="t" id="st2" style="left:997.81px;top:465.09px;font-size:13.6px;color:#ee8a22;font-weight:bold;letter-spacing:0.7px;transform:scaleX(0.9723);">Not Sent</div>
<svg class="abs" style="left:1332px;top:471.0px" width="24" height="8" viewBox="0 0 24 8"><g fill="#0a0a0a"><rect x="0.400" y="0.300" width="6.200" height="6.600" rx="2"/><rect x="8.600" y="0.300" width="6.200" height="6.600" rx="2"/><rect x="16.800" y="0.300" width="6.200" height="6.600" rx="2"/></g></svg>
<div class="rowln" style="top:548.5px"></div>
<div class="cb" style="top:519.7px"></div>
<div class="av" style="top:511.0px"></div>
<div class="t" id="ini3" style="left:309.70px;top:515.30px;font-size:15px;color:#efefef;transform:scaleX(1.0000);">DA</div>
<div class="t" id="nm3" style="left:344.18px;top:513.65px;font-size:14px;color:#3a3a3a;transform:scaleX(0.9790);">Danny Abdeljabbar</div>
<div class="t" id="pol3" style="left:496.75px;top:513.65px;font-size:14px;color:#3a3a3a;transform:scaleX(0.9536);">21st Century Health and Benefits - ...</div>
<div class="t" id="sd3" style="left:760.44px;top:513.65px;font-size:14px;color:#3a3a3a;transform:scaleX(0.9904);">02/13/2020</div>
<div class="t" id="cr3" style="left:896.44px;top:513.65px;font-size:14px;color:#3a3a3a;transform:scaleX(0.9904);">02/13/2020</div>
<div class="ul" style="top:509.5px;width:271.5px"></div>
<div class="t" id="st3" style="left:996.54px;top:513.59px;font-size:13.6px;color:#3fa32e;font-weight:bold;letter-spacing:0.7px;transform:scaleX(0.9120);">Fully Paid</div>
<svg class="abs" style="left:1332px;top:519.5px" width="24" height="8" viewBox="0 0 24 8"><g fill="#0a0a0a"><rect x="0.400" y="0.300" width="6.200" height="6.600" rx="2"/><rect x="8.600" y="0.300" width="6.200" height="6.600" rx="2"/><rect x="16.800" y="0.300" width="6.200" height="6.600" rx="2"/></g></svg>
<div class="rowln" style="top:597.0px"></div>
<div class="cb" style="top:568.2px"></div>
<div class="av" style="top:559.0px;background:none"><svg width="29" height="30" viewBox="0 0 29 30"><defs><clipPath id="ej4c"><circle cx="14.500" cy="14.800" r="14.300"/></clipPath><linearGradient id="ej4cg" x1="0" x2="1" y1="0" y2="0"><stop offset="0" stop-color="#262a36"/><stop offset="0.550" stop-color="#3a4258"/><stop offset="1" stop-color="#65749a"/></linearGradient></defs><g clip-path="url(#ej4c)"><rect width="29" height="30" fill="url(#ej4cg)"/><path d="M4.500 22 C3 12 7 3.800 14 3.800 C21 3.800 23.500 10 22 17 C21.500 20 23 22 24 24 L5 25 Z" fill="#2f1812"/><path d="M10.200 10.500 C10.200 6.800 18.600 6.500 18.800 11 C19 15 17.500 18.800 14.600 18.800 C11.800 18.800 10.200 15 10.200 10.500 Z" fill="#9c5f47"/><path d="M9.800 11.500 C9.500 7 12.500 5.600 14.500 5.800 C17 5.800 19.500 7.500 19.200 11.500 C18 9 16 8 14 8.400 C12 8.600 10.500 9.500 9.800 11.500 Z" fill="#2f1812"/><path d="M12.600 14.600 Q14.600 16.200 16.600 14.600 Q14.600 15.300 12.600 14.600 Z" fill="#e9d6cc"/><path d="M1 30 C2 22.500 6 19.500 11.500 19 L14.600 26 L18 19 C23 19.500 27 22.500 28 30 Z" fill="#131218"/><path d="M11.800 18.600 L14.800 26.500 L17.600 18.600 C16 19.800 13.400 19.800 11.800 18.600 Z" fill="#a3714f"/></g><circle cx="14.500" cy="14.800" r="13.700" fill="none" stroke="#14151b" stroke-width="1.300" opacity="0.800"/></svg>
</div>
<div class="t" id="nm4" style="left:344.20px;top:562.15px;font-size:14px;color:#3a3a3a;transform:scaleX(0.9336);">Erica Jain</div>
<div class="t" id="pol4" style="left:497.34px;top:562.15px;font-size:14px;color:#3a3a3a;transform:scaleX(0.9610);">1199 National Benefit Fund - 13162</div>
<div class="t" id="sd4" style="left:760.11px;top:562.15px;font-size:14px;color:#3a3a3a;transform:scaleX(0.9903);">07/19/2019</div>
<div class="t" id="cr4" style="left:896.11px;top:562.15px;font-size:14px;color:#3a3a3a;transform:scaleX(0.9903);">07/19/2019</div>
<div class="ul" style="top:558.0px;width:180px"></div>
<svg class="abs" style="left:977.200px;top:565.4px" width="15" height="14" viewBox="0 0 15 14"><path d="M7.400 0.800 L14.200 13 H0.600 Z" fill="#e0202c"/><path d="M7.400 4.800 V9" stroke="#fff" stroke-width="1.700"/><circle cx="7.400" cy="10.900" r="1" fill="#fff"/></svg>
<div class="t" id="st4" style="left:996.74px;top:562.09px;font-size:13.6px;color:#e0202c;font-weight:bold;letter-spacing:0.7px;transform:scaleX(0.9186);">Denied by Insurance</div>
<svg class="abs" style="left:1332px;top:568.0px" width="24" height="8" viewBox="0 0 24 8"><g fill="#0a0a0a"><rect x="0.400" y="0.300" width="6.200" height="6.600" rx="2"/><rect x="8.600" y="0.300" width="6.200" height="6.600" rx="2"/><rect x="16.800" y="0.300" width="6.200" height="6.600" rx="2"/></g></svg>
<div class="rowln" style="top:645.5px"></div>
<div class="cb" style="top:616.7px"></div>
<div class="av" style="top:608.0px"></div>
<div class="t" id="ini5" style="left:309.50px;top:612.30px;font-size:15px;color:#efefef;transform:scaleX(1.0000);">CB</div>
<div class="t" id="nm5" style="left:344.33px;top:610.65px;font-size:14px;color:#3a3a3a;transform:scaleX(0.9374);">Carlos Beltran</div>
<div class="t" id="pol5" style="left:497.34px;top:610.65px;font-size:14px;color:#3a3a3a;transform:scaleX(0.9610);">1199 National Benefit Fund - 13162</div>
<div class="t" id="sd5" style="left:760.11px;top:610.65px;font-size:14px;color:#3a3a3a;transform:scaleX(0.9903);">05/29/2019</div>
<div class="t" id="cr5" style="left:896.11px;top:610.65px;font-size:14px;color:#3a3a3a;transform:scaleX(0.9903);">05/29/2019</div>
<div class="ul" style="top:606.5px;width:180px"></div>
<div class="t" id="st5" style="left:996.54px;top:610.59px;font-size:13.6px;color:#3fa32e;font-weight:bold;letter-spacing:0.7px;transform:scaleX(0.9120);">Fully Paid</div>
<svg class="abs" style="left:1332px;top:616.5px" width="24" height="8" viewBox="0 0 24 8"><g fill="#0a0a0a"><rect x="0.400" y="0.300" width="6.200" height="6.600" rx="2"/><rect x="8.600" y="0.300" width="6.200" height="6.600" rx="2"/><rect x="16.800" y="0.300" width="6.200" height="6.600" rx="2"/></g></svg>
<div class="rowln" style="top:694.0px"></div>
<div class="cb" style="top:665.2px"></div>
<div class="av" style="top:656.5px"></div>
<div class="t" id="ini6" style="left:309.70px;top:660.80px;font-size:15px;color:#efefef;transform:scaleX(1.0000);">DA</div>
<div class="t" id="nm6" style="left:344.18px;top:659.15px;font-size:14px;color:#3a3a3a;transform:scaleX(0.9790);">Danny Abdeljabbar</div>
<div class="t" id="pol6" style="left:496.75px;top:659.15px;font-size:14px;color:#3a3a3a;transform:scaleX(0.9536);">21st Century Health and Benefits - ...</div>
<div class="t" id="sd6" style="left:760.11px;top:659.15px;font-size:14px;color:#3a3a3a;transform:scaleX(0.9903);">05/29/2019</div>
<div class="t" id="cr6" style="left:896.11px;top:659.15px;font-size:14px;color:#3a3a3a;transform:scaleX(0.9903);">05/29/2019</div>
<div class="ul" style="top:655.0px;width:267px"></div>
<div class="t" id="st6" style="left:996.54px;top:659.09px;font-size:13.6px;color:#3fa32e;font-weight:bold;letter-spacing:0.7px;transform:scaleX(0.9120);">Fully Paid</div>
<svg class="abs" style="left:1332px;top:665.0px" width="24" height="8" viewBox="0 0 24 8"><g fill="#0a0a0a"><rect x="0.400" y="0.300" width="6.200" height="6.600" rx="2"/><rect x="8.600" y="0.300" width="6.200" height="6.600" rx="2"/><rect x="16.800" y="0.300" width="6.200" height="6.600" rx="2"/></g></svg>
<div class="rowln" style="top:742.5px"></div>
<div class="cb" style="top:713.7px"></div>
<div class="av" style="top:705.0px"></div>
<div class="t" id="ini7" style="left:309.70px;top:709.30px;font-size:15px;color:#efefef;transform:scaleX(1.0000);">DA</div>
<div class="t" id="nm7" style="left:344.18px;top:707.65px;font-size:14px;color:#3a3a3a;transform:scaleX(0.9790);">Danny Abdeljabbar</div>
<div class="t" id="pol7" style="left:496.75px;top:707.65px;font-size:14px;color:#3a3a3a;transform:scaleX(0.9536);">21st Century Health and Benefits - ...</div>
<div class="t" id="sd7" style="left:760.11px;top:707.65px;font-size:14px;color:#3a3a3a;transform:scaleX(0.9903);">05/29/2019</div>
<div class="t" id="cr7" style="left:896.11px;top:707.65px;font-size:14px;color:#3a3a3a;transform:scaleX(0.9903);">05/29/2019</div>
<div class="ul" style="top:703.5px;width:267px"></div>
<div class="t" id="st7" style="left:996.54px;top:707.59px;font-size:13.6px;color:#3fa32e;font-weight:bold;letter-spacing:0.7px;transform:scaleX(0.9120);">Fully Paid</div>
<svg class="abs" style="left:1332px;top:713.5px" width="24" height="8" viewBox="0 0 24 8"><g fill="#0a0a0a"><rect x="0.400" y="0.300" width="6.200" height="6.600" rx="2"/><rect x="8.600" y="0.300" width="6.200" height="6.600" rx="2"/><rect x="16.800" y="0.300" width="6.200" height="6.600" rx="2"/></g></svg>
<div class="rowln" style="top:791.0px"></div>
<div class="cb" style="top:762.2px"></div>
<div class="av" style="top:753.5px"></div>
<div class="t" id="ini8" style="left:309.70px;top:757.80px;font-size:15px;color:#efefef;transform:scaleX(1.0000);">DA</div>
<div class="t" id="nm8" style="left:344.18px;top:756.15px;font-size:14px;color:#3a3a3a;transform:scaleX(0.9790);">Danny Abdeljabbar</div>
<div class="t" id="pol8" style="left:496.75px;top:756.15px;font-size:14px;color:#3a3a3a;transform:scaleX(0.9536);">21st Century Health and Benefits - ...</div>
<div class="t" id="sd8" style="left:760.11px;top:756.15px;font-size:14px;color:#3a3a3a;transform:scaleX(0.9903);">05/29/2019</div>
<div class="t" id="cr8" style="left:896.11px;top:756.15px;font-size:14px;color:#3a3a3a;transform:scaleX(0.9903);">05/29/2019</div>
<div class="ul" style="top:752.0px;width:267px"></div>
<div class="t" id="st8" style="left:997.13px;top:756.09px;font-size:13.6px;color:#919191;font-weight:bold;letter-spacing:0.7px;transform:scaleX(0.9314);">Client's Deductible Applies</div>
<svg class="abs" style="left:1332px;top:762.0px" width="24" height="8" viewBox="0 0 24 8"><g fill="#0a0a0a"><rect x="0.400" y="0.300" width="6.200" height="6.600" rx="2"/><rect x="8.600" y="0.300" width="6.200" height="6.600" rx="2"/><rect x="16.800" y="0.300" width="6.200" height="6.600" rx="2"/></g></svg>
<div class="rowln" style="top:839.5px"></div>
<div class="cb" style="top:810.7px"></div>
<div class="av" style="top:802.0px"></div>
<div class="t" id="ini9" style="left:309.70px;top:806.30px;font-size:15px;color:#efefef;transform:scaleX(1.0000);">DA</div>
<div class="t" id="nm9" style="left:344.18px;top:804.65px;font-size:14px;color:#3a3a3a;transform:scaleX(0.9790);">Danny Abdeljabbar</div>
<div class="t" id="pol9" style="left:496.75px;top:804.65px;font-size:14px;color:#3a3a3a;transform:scaleX(0.9536);">21st Century Health and Benefits - ...</div>
<div class="t" id="sd9" style="left:760.11px;top:804.65px;font-size:14px;color:#3a3a3a;transform:scaleX(0.9903);">05/29/2019</div>
<div class="t" id="cr9" style="left:896.11px;top:804.65px;font-size:14px;color:#3a3a3a;transform:scaleX(0.9903);">05/29/2019</div>
<div class="ul" style="top:800.5px;width:267px"></div>
<div class="t" id="st9" style="left:997.00px;top:802.29px;font-size:13.6px;color:#ee8a22;font-weight:bold;letter-spacing:0.7px;transform:scaleX(1.0144);">Partially Paid (Patient Responsible)</div>
<svg class="abs" style="left:1332px;top:810.5px" width="24" height="8" viewBox="0 0 24 8"><g fill="#0a0a0a"><rect x="0.400" y="0.300" width="6.200" height="6.600" rx="2"/><rect x="8.600" y="0.300" width="6.200" height="6.600" rx="2"/><rect x="16.800" y="0.300" width="6.200" height="6.600" rx="2"/></g></svg>
<div class="box" style="left:1308px;top:747px;width:98px;height:55px;z-index:3;border-radius:28px;background:#4e62e5;box-shadow:0 1px 6px rgba(0,0,0,0.16)"></div>
<svg class="abs" style="left:1326px;top:761px;z-index:3" width="20" height="28" viewBox="0 0 20 28"><path d="M3.500 8.500 C3.500 4.500 6.400 2.400 10 2.400 C13.600 2.400 16.500 4.600 16.500 8 C16.500 12.400 10.400 12.600 10.400 17.600" fill="none" stroke="#fff" stroke-width="2.300" stroke-linecap="round"/><circle cx="10.400" cy="23.400" r="1.700" fill="#fff"/></svg>
<div class="t" id="help" style="left:1357.81px;top:763.06px;font-size:13.4px;color:#fff;font-weight:bold;transform:scaleX(1.0253);z-index:3;">Help</div>
</body>
</html>
